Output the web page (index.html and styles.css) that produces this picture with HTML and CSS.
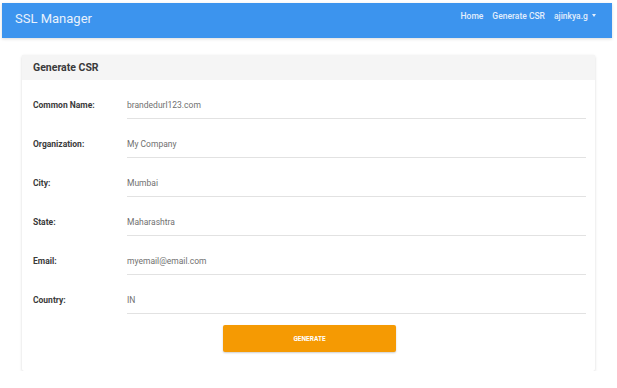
FILE: index.html
```html
<!DOCTYPE html>
<html lang="en">
<head>
  <meta charset="UTF-8">
  <meta name="viewport" content="width=device-width, initial-scale=1.0">
  <title>SSL Manager</title>
  <link rel="stylesheet" href="styles.css">
</head>
<body>
  <nav class="navbar">
    <span class="brand">SSL Manager</span>
    <div class="nav-links">
      <a href="#">Home</a>
      <a href="#">Generate CSR</a>
      <a href="#" class="dropdown">ajinkya.g <span class="caret"></span></a>
    </div>
  </nav>

  <div class="card">
    <div class="card-header">Generate CSR</div>
    <form class="card-body">
      <div class="row">
        <label>Common Name:</label>
        <input type="text" value="brandedurl123.com">
      </div>
      <div class="row">
        <label>Organization:</label>
        <input type="text" value="My Company">
      </div>
      <div class="row">
        <label>City:</label>
        <input type="text" value="Mumbai">
      </div>
      <div class="row">
        <label>State:</label>
        <input type="text" value="Maharashtra">
      </div>
      <div class="row">
        <label>Email:</label>
        <input type="text" value="myemail@email.com">
      </div>
      <div class="row">
        <label>Country:</label>
        <input type="text" value="IN">
      </div>
      <div class="actions">
        <button type="button">Generate</button>
      </div>
    </form>
  </div>
</body>
</html>
```

FILE: styles.css
```css
body {
  font-family: Roboto, "Liberation Sans", Arial, sans-serif;
  margin: 0;
  padding-top: 3px;
  background-color: #ffffff;
}
.navbar {
  margin: 0 5px 0 2px;
  height: 35px;
  background-color: #3c94ee;
  display: flex;
  align-items: flex-start;
  justify-content: space-between;
  box-shadow: 0 1px 3px rgba(0, 0, 0, 0.15);
}
.brand {
  color: #e8f1fc;
  font-size: 13px;
  font-weight: 400;
  margin: 8px 0 0 13px;
}
.nav-links {
  display: flex;
  gap: 9px;
  margin: 8px 16px 0 0;
}
.nav-links a {
  color: #e3eefc;
  text-decoration: none;
  font-size: 8.5px;
  font-weight: 500;
}
.caret {
  display: inline-block;
  margin-left: 2px;
  vertical-align: 2px;
  border-left: 2.5px solid transparent;
  border-right: 2.5px solid transparent;
  border-top: 3px solid #e3eefc;
}
.card {
  margin: 17px 22px 0 22px;
  width: 573px;
  background-color: #ffffff;
  border-radius: 2px;
  box-shadow: 0 1px 3px rgba(0, 0, 0, 0.16);
}
.card-header {
  height: 25px;
  line-height: 25px;
  padding-left: 11px;
  background-color: #f5f5f5;
  color: #3a3a3a;
  font-size: 10.5px;
  font-weight: 700;
}
.card-body {
  margin: 0;
  padding: 11px 9px 19px 11px;
  display: flex;
  flex-direction: column;
  gap: 11px;
}
.row {
  display: flex;
  align-items: center;
}
.row label {
  width: 94px;
  color: #3a3a3a;
  font-size: 8.5px;
  font-weight: 700;
}
.row input {
  flex: 1;
  height: 28px;
  padding: 0;
  border: none;
  border-bottom: 1px solid #e2e2e2;
  color: #707070;
  font-family: Roboto, "Liberation Sans", Arial, sans-serif;
  font-size: 8.5px;
  outline: none;
  box-sizing: border-box;
}
.actions {
  display: flex;
  justify-content: center;
}
.actions button {
  width: 173px;
  height: 27px;
  border: none;
  border-radius: 2px;
  background-color: #f59a03;
  color: #ffffff;
  font-family: Roboto, "Liberation Sans", Arial, sans-serif;
  font-size: 6.5px;
  font-weight: 700;
  text-transform: uppercase;
  box-shadow: 0 1px 2px rgba(0, 0, 0, 0.2);
}
```
